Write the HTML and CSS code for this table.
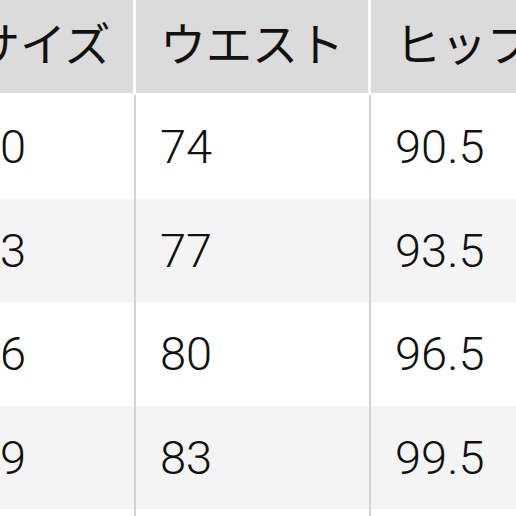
FILE: index.html
```html
<!DOCTYPE html>
<html lang="ja">
<head>
<meta charset="utf-8">
<link rel="stylesheet" href="styles.css">
</head>
<body>
<div class="table">
  <div class="row head">
    <div class="cell c1">サイズ</div>
    <div class="cell c2">ウエスト</div>
    <div class="cell c3">ヒップ</div>
  </div>
  <div class="row">
    <div class="cell c1">70</div>
    <div class="cell c2">74</div>
    <div class="cell c3">90.5</div>
  </div>
  <div class="row alt">
    <div class="cell c1">73</div>
    <div class="cell c2">77</div>
    <div class="cell c3">93.5</div>
  </div>
  <div class="row">
    <div class="cell c1">76</div>
    <div class="cell c2">80</div>
    <div class="cell c3">96.5</div>
  </div>
  <div class="row alt">
    <div class="cell c1">79</div>
    <div class="cell c2">83</div>
    <div class="cell c3">99.5</div>
  </div>
  <div class="row">
    <div class="cell c1">82</div>
    <div class="cell c2">86</div>
    <div class="cell c3">102.5</div>
  </div>
</div>
</body>
</html>
```
FILE: styles.css
```css
html, body {
  margin: 0;
  padding: 0;
  background: #ffffff;
  overflow: hidden;
  width: 516px;
  height: 516px;
}

.table {
  margin-top: -11px;
  margin-left: -50px;
  width: 700px;
  font-family: "Noto Sans CJK JP", "Noto Sans", sans-serif;
  font-size: 46px;
  color: #111111;
}

.row {
  display: flex;
  height: 103.5px;
  background: #ffffff;
}

.row.alt {
  background: #f4f4f4;
}

.row.head {
  height: 104px;
  margin-bottom: 2px;
}

.cell {
  box-sizing: border-box;
  display: flex;
  align-items: center;
  padding-left: 24px;
  border-right: 2px solid #d3d3d3;
  font-family: Roboto, "Noto Sans CJK JP", sans-serif;
  font-size: 47px;
  font-weight: 300;
  line-height: 1;
}

.head .cell {
  background: #dbdbdb;
  border-right: 3px solid #ffffff;
  font-family: "Noto Sans CJK JP", sans-serif;
  font-size: 46px;
  font-weight: 400;
}

.c1 { width: 186px; }
.c2 { width: 235px; }
.c3 { width: 235px; }
```
